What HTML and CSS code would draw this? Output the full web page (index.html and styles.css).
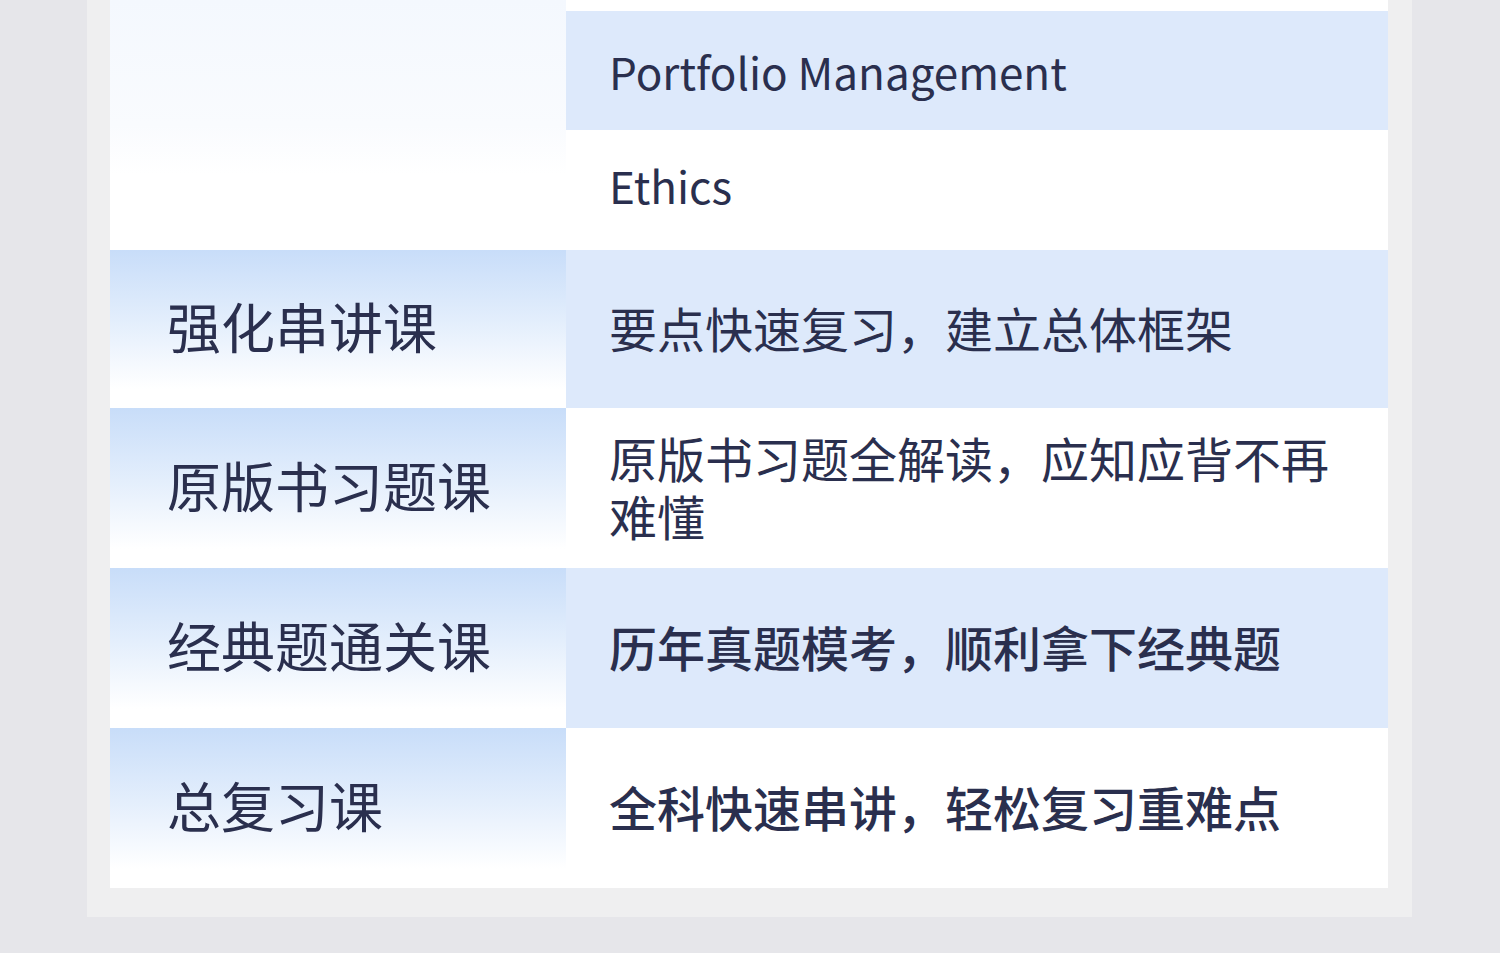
FILE: index.html
```html
<!DOCTYPE html>
<html lang="zh-CN">
<head>
<meta charset="utf-8">
<title>课程安排</title>
<link rel="stylesheet" href="styles.css">
</head>
<body>
<div class="card">
  <div class="table">
    <div class="cell head head-top"></div>
    <div class="cell desc white top-strip"></div>
    <div class="cell desc blue en">Portfolio Management</div>
    <div class="cell desc white en en-low">Ethics</div>

    <div class="cell head">强化串讲课</div>
    <div class="cell desc blue">要点快速复习，建立总体框架</div>

    <div class="cell head">原版书习题课</div>
    <div class="cell desc white">原版书习题全解读，应知应背不再难懂</div>

    <div class="cell head">经典题通关课</div>
    <div class="cell desc blue strong">历年真题模考，顺利拿下经典题</div>

    <div class="cell head">总复习课</div>
    <div class="cell desc white strong">全科快速串讲，轻松复习重难点</div>
  </div>
</div>
</body>
</html>
```

FILE: styles.css
```css
html, body {
  margin: 0;
  padding: 0;
}
body {
  background: #e6e6ea;
  font-family: "Noto Sans CJK SC", "Noto Sans", sans-serif;
  color: #2a2f4e;
  width: 1500px;
  height: 953px;
  overflow: hidden;
}
.card {
  margin-left: 87px;
  width: 1325px;
  box-sizing: border-box;
  padding: 0 24px 29px 23px;
  background: #efeff0;
}
.table {
  display: grid;
  grid-template-columns: 456px 822px;
  grid-template-rows: 11px 119px 120px 158px 160px 160px 160px;
}
.cell {
  display: flex;
  align-items: center;
  box-sizing: border-box;
}
.head {
  grid-column: 1;
  padding-left: 57px;
  padding-bottom: 8px;
  font-size: 54px;
  background: linear-gradient(180deg, #c8ddf9 0%, #e3eefc 45%, #ffffff 88%);
}
.head-top {
  grid-row: 1 / span 3;
  padding: 0;
  background: linear-gradient(180deg, #f4f8fe 0%, #f9fbfe 50%, #ffffff 70%);
}
.desc {
  grid-column: 2;
  padding-left: 43px;
  padding-right: 50px;
  padding-bottom: 4px;
  font-size: 48px;
  line-height: 58px;
}
.top-strip {
  padding: 0;
}
.desc.en {
  font-size: 44px;
  padding-bottom: 0;
}
.desc.en-low {
  padding-bottom: 10px;
}
.blue {
  background: #dde9fb;
}
.white {
  background: #ffffff;
}
.strong {
  font-weight: 500;
}
```
